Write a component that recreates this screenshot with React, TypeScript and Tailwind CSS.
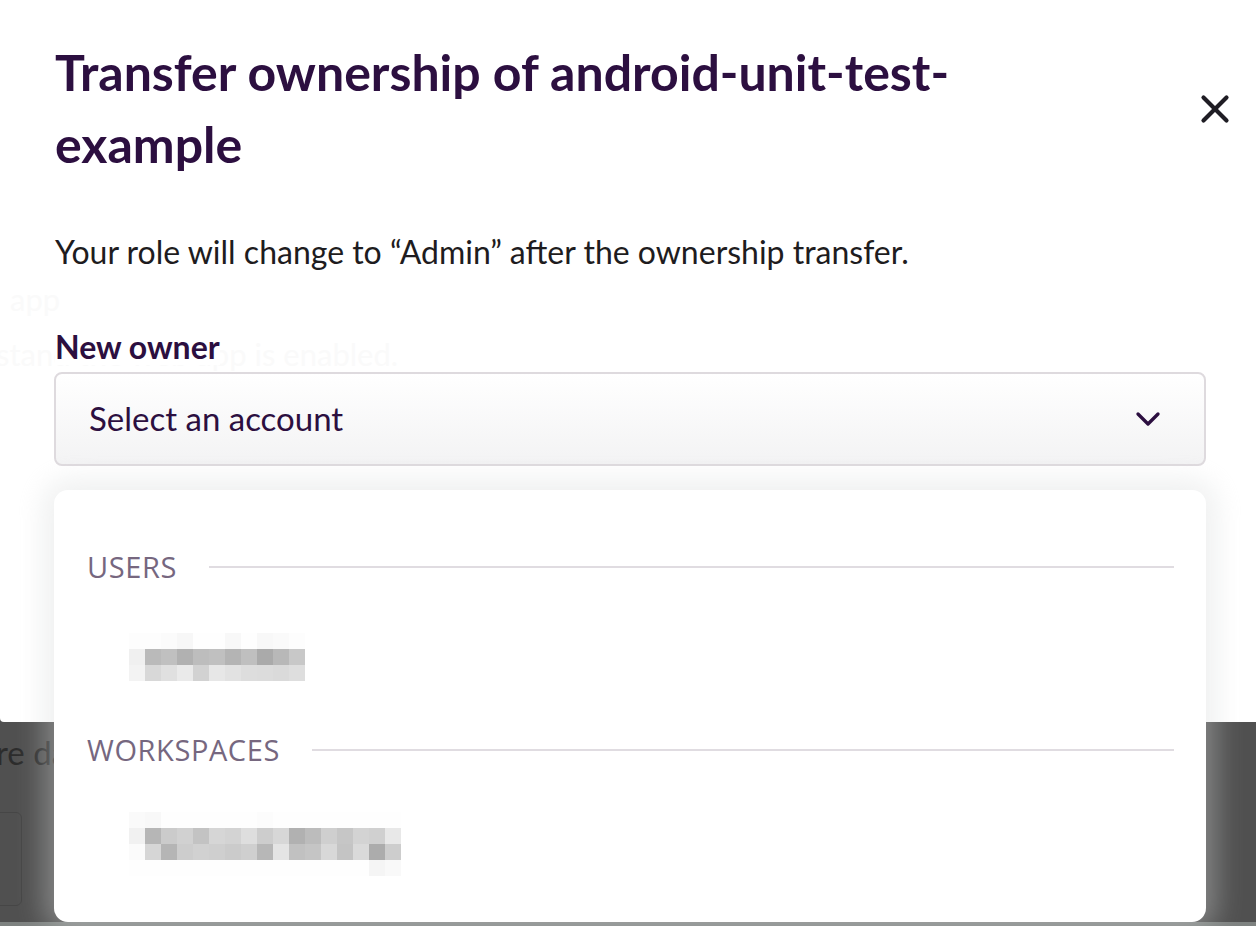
import { ChevronDown, X } from 'lucide-react';

const font = { fontFamily: 'Lato, "Noto Sans", sans-serif' };

// pixelated placeholder rows for blurred names
const userCells = [
  ['#fdfdfd', '#fdfdfd', '#fbfbfb', '#f7f7f7', '#fefefe', '#fefefe', '#f8f8f8', '#fefefe', '#f8f8f8', '#fafafa', '#fdfdfd'],
  ['#f0f0f0', '#bababa', '#c0c0c0', '#b1b1b1', '#bdbdbd', '#c0c0c0', '#b4b4b4', '#bfbfbf', '#aaaaaa', '#b8b8b8', '#c8c8c8'],
  ['#f3f3f3', '#d8d8d8', '#e0e0e0', '#eaeaea', '#d2d2d2', '#e7e7e7', '#e2e2e2', '#dddddd', '#dcdcdc', '#dadada', '#dedede'],
];

const workspaceCells = [
  ['#fafafa', '#f8f8f8', '#fefefe', '#fefefe', '#fefefe', '#fefefe', '#fefefe', '#fefefe', '#fcfcfc', '#fefefe', '#fefefe', '#fefefe', '#fefefe', '#fefefe', '#fefefe', '#fefefe', '#fefefe'],
  ['#f1f1f1', '#b6b6b6', '#cbcbcb', '#d1d1d1', '#c3c3c3', '#d6d6d6', '#d3d3d3', '#dedede', '#cdcdcd', '#d7d7d7', '#b1b1b1', '#bcbcbc', '#cfcfcf', '#c6c6c6', '#d3d3d3', '#d0d0d0', '#e8e8e8'],
  ['#fbfbfb', '#d6d6d6', '#b5b5b5', '#cdcdcd', '#d1d1d1', '#cfcfcf', '#cbcbcb', '#cfcfcf', '#b7b7b7', '#e4e4e4', '#c1c1c1', '#c5c5c5', '#d8d8d8', '#c4c4c4', '#dadada', '#acacac', '#cdcdcd'],
  ['#fefefe', '#fefefe', '#fefefe', '#fefefe', '#fefefe', '#fefefe', '#fefefe', '#fefefe', '#fefefe', '#fefefe', '#fefefe', '#fefefe', '#fefefe', '#fefefe', '#fefefe', '#f5f5f5', '#f9f9f9'],
];

function Pixels({ rows }: { rows: string[][] }) {
  return (
    <div className="flex flex-col">
      {rows.map((row, i) => (
        <div key={i} className="flex">
          {row.map((c, j) => (
            <div key={j} className="h-4 w-4" style={{ backgroundColor: c }} />
          ))}
        </div>
      ))}
    </div>
  );
}

function Section({ title, rows, space }: { title: string; rows: string[][]; space: string }) {
  return (
    <div className="flex flex-col">
      <div className="flex items-center gap-8">
        <span
          className="text-[29px] leading-[36px] tracking-[0.6px] text-[#76677f]"
          style={{ fontFamily: '"Open Sans", Lato, sans-serif' }}
        >
          {title}
        </span>
        <div className="h-[2px] flex-1 bg-[#e0dce1]" />
      </div>
      <div className={`${space} pl-[42px]`}>
        <Pixels rows={rows} />
      </div>
    </div>
  );
}

function App() {
  return (
    <div className="relative h-[926px] w-[1256px] overflow-hidden bg-[#505050]" style={font}>
      <div className="relative h-[722px] rounded-bl-[4px] bg-white px-[55px] pt-[36px]">
        {/* ghost text from the page behind */}
        <div className="absolute left-[10px] top-[276px] text-[31px] text-[#fafafa]">app</div>
        <div className="absolute left-[-4px] top-[331px] text-[31px] text-[#fafafa]">
          stand the web app is enabled.
        </div>

        <div className="relative flex items-start justify-between">
          <h1 className="w-[930px] text-[50px] font-bold leading-[72px] text-[#2c0f40]">
            Transfer ownership of android-unit-test-example
          </h1>
          <button className="mr-[-37px] mt-[50px] text-[#1f1d24]">
            <X size={46} strokeWidth={2.2} />
          </button>
        </div>
        <p className="relative mt-[52px] text-[32px] leading-[40px] text-[#1e1c20]">
          Your role will change to “Admin” after the ownership transfer.
        </p>
        <div className="relative mt-[57px] w-fit bg-white text-[32px] font-bold leading-[36px] text-[#2c0f40]">
          New owner
        </div>
        <div className="relative ml-[-1px] mr-[-5px] mt-[7px] flex h-[94px] items-center justify-between rounded-[8px] border-2 border-[#dedade] bg-gradient-to-b from-white to-[#f3f3f4] pl-[33px] pr-[36px]">
          <span className="text-[33px] text-[#2c0f40]">Select an account</span>
          <ChevronDown size={40} strokeWidth={2} className="text-[#2c0f40]" />
        </div>
      </div>

      {/* page behind the overlay */}
      <div className="flex flex-col">
        <div className="ml-[-4px] mt-[6px] text-[33px] text-[#2c2c2c]">re date</div>
        <div className="ml-[-20px] mt-[34px] h-[94px] w-[42px] rounded-[6px] border border-[#464646]" />
      </div>
      <div className="absolute bottom-0 left-0 h-[4px] w-full bg-[#7e8280]" />

      {/* dropdown menu */}
      <div className="absolute left-[54px] top-[490px] flex h-[432px] w-[1152px] flex-col gap-[51px] rounded-[14px] bg-white pl-[33px] pr-[32px] pt-[59px] shadow-[0_0_28px_10px_rgba(215,218,217,0.4)]">
        <Section title="USERS" rows={userCells} space="mt-[48px]" />
        <Section title="WORKSPACES" rows={workspaceCells} space="mt-[44px]" />
      </div>
    </div>
  );
}

export default App;
